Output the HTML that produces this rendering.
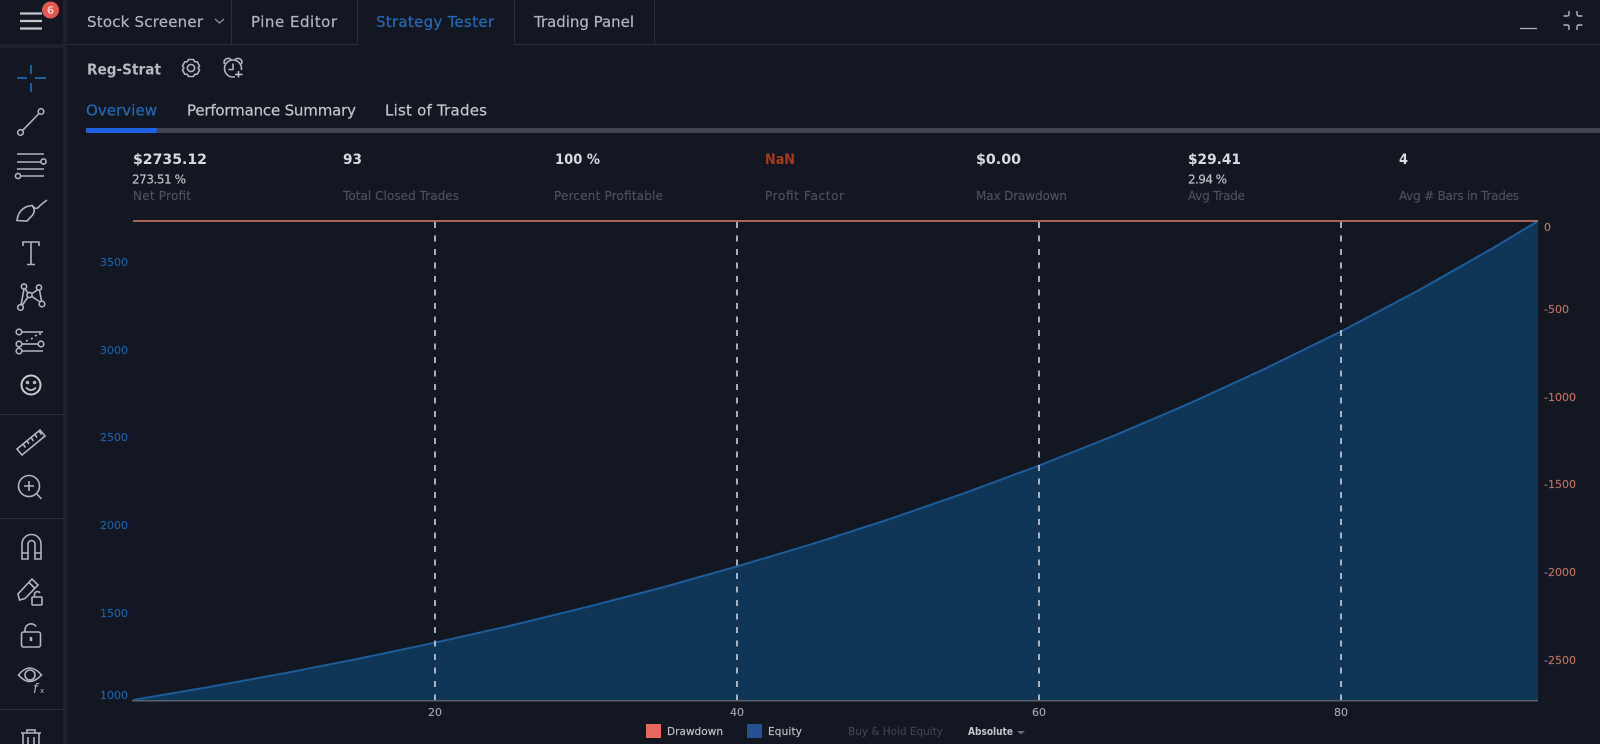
<!DOCTYPE html>
<html>
<head>
<meta charset="utf-8">
<style>
html,body{margin:0;padding:0;width:1600px;height:744px;overflow:hidden;background:#131722}
svg{display:block;position:absolute;left:0;top:0}
text{font-family:"DejaVu Sans",sans-serif}
.tab{font-size:15px;fill:#b2b5be;stroke:#b2b5be;stroke-width:.2}
.blue{fill:#2568b5;stroke:#2568b5}
.hi{fill:#c4c6cc;stroke:#c4c6cc}
.val{font-size:14.5px;font-weight:bold;fill:#d8dae0}
.sub{font-size:12px;fill:#c0c2c9;stroke:#c0c2c9;stroke-width:.15}
.lab{font-size:12px;fill:#4d515c;stroke:#4d515c;stroke-width:.15}
.l{font-size:11px;fill:#1c5ea6;stroke:#1c5ea6;stroke-width:.15}
.r{font-size:11px;fill:#bd7260;stroke:#bd7260;stroke-width:.15}
.x{font-size:11px;fill:#a9acb5;stroke:#a9acb5;stroke-width:.1}
.ic{fill:none;stroke:#b2b5be;stroke-width:1.6}
</style>
</head>
<body>
<svg width="1600" height="744" viewBox="0 0 1600 744" xmlns="http://www.w3.org/2000/svg">
<rect width="1600" height="744" fill="#131722"/>

<!-- frame -->
<rect x="63" y="0" width="4" height="744" fill="#1e222d"/>
<rect x="0" y="44" width="63" height="4" fill="#1e222d"/>
<rect x="67" y="44" width="291" height="1" fill="#2a2e39"/>
<rect x="514" y="44" width="1086" height="1" fill="#2a2e39"/>
<rect x="231" y="0" width="1" height="44" fill="#2a2e39"/>
<rect x="357" y="0" width="1" height="44" fill="#2a2e39"/>
<rect x="514" y="0" width="1" height="44" fill="#2a2e39"/>
<rect x="654" y="0" width="1" height="44" fill="#2a2e39"/>
<rect x="0" y="414" width="63" height="1" fill="#2a2e39"/>
<rect x="0" y="518" width="63" height="1" fill="#2a2e39"/>
<rect x="0" y="709" width="63" height="1" fill="#2a2e39"/>

<!-- hamburger -->
<path d="M20 13.500H42M20 21H42M20 28.500H42" stroke="#c4c6cc" stroke-width="2.200" fill="none"/>
<circle cx="50.500" cy="10" r="8.500" fill="#e5574f"/>
<text x="50.500" y="14" font-size="10.500" font-weight="bold" fill="#f0c9c4" text-anchor="middle">6</text>

<!-- top tabs -->
<text class="tab" x="87" y="27" textLength="116">Stock Screener</text>
<path d="M215 19l4.500 4 4.500-4" fill="none" stroke="#8f929b" stroke-width="1.300"/>
<text class="tab" x="251" y="27" textLength="86">Pine Editor</text>
<text class="tab blue" x="376" y="27" textLength="118">Strategy Tester</text>
<text class="tab" x="534" y="27" textLength="100">Trading Panel</text>

<!-- top right -->
<path d="M1520 28.500H1537" stroke="#b2b5be" stroke-width="1.300"/>
<path d="M1569 11v3q0 2-2 2h-3.500M1577 11v3q0 2 2 2h3.500M1569 30v-3q0-2-2-2h-3.500M1577 30v-3q0-2 2-2h3.500" fill="none" stroke="#b2b5be" stroke-width="1.400"/>

<!-- strategy header -->
<text x="87" y="74.500" font-size="15" font-weight="bold" fill="#b8bac2" textLength="74" lengthAdjust="spacingAndGlyphs">Reg-Strat</text>
<g class="ic">
<path d="M188.500 60.500h5l1.200 2.200 2.500.1 2.300 4.200-1.300 2 1.300 2-2.300 4.200-2.500.1-1.200 2.200h-5l-1.200-2.200-2.500-.1-2.300-4.200 1.300-2-1.300-2 2.300-4.200 2.500-.1z" transform="translate(0 -1)"/>
<circle cx="191" cy="68" r="3.600"/>
<circle cx="233" cy="68.500" r="8.500"/>
<path d="M224.500 64q-1.500-4 2.500-5.500 3-.5 4 1.200M241.500 64q1.500-4-2.500-5.500-3-.5-4 1.200M233 63.500v6h-4.500"/>
</g>
<rect x="235" y="70" width="9" height="9" fill="#131722"/>
<path d="M238.500 71v6.500M235 74.500h7.500" stroke="#c4c6cc" stroke-width="1.500" fill="none"/>

<!-- sub tabs -->
<text class="tab blue" x="86" y="115.500" textLength="71">Overview</text>
<text class="tab hi" x="187" y="115.500" textLength="169">Performance Summary</text>
<text class="tab hi" x="385" y="115.500" textLength="102">List of Trades</text>
<rect x="86" y="128" width="1514" height="5" fill="#434651"/>
<rect x="86" y="128" width="71" height="5" rx="2" fill="#1d62e0"/>

<!-- stats -->
<text class="val" x="133" y="164" textLength="74" lengthAdjust="spacingAndGlyphs">$2735.12</text>
<text class="sub" x="132" y="183.500" textLength="54">273.51 %</text>
<text class="lab" x="133" y="200" textLength="58">Net Profit</text>

<text class="val" x="343" y="164" textLength="19" lengthAdjust="spacingAndGlyphs">93</text>
<text class="lab" x="343" y="200" textLength="116">Total Closed Trades</text>

<text class="val" x="555" y="164" textLength="45" lengthAdjust="spacingAndGlyphs">100 %</text>
<text class="lab" x="554" y="200" textLength="109">Percent Profitable</text>

<text class="val" x="765" y="164" textLength="30" lengthAdjust="spacingAndGlyphs" style="fill:#a83a20">NaN</text>
<text class="lab" x="765" y="200" textLength="79">Profit Factor</text>

<text class="val" x="976" y="164" textLength="45" lengthAdjust="spacingAndGlyphs">$0.00</text>
<text class="lab" x="976" y="200" textLength="91">Max Drawdown</text>

<text class="val" x="1188" y="164" textLength="53" lengthAdjust="spacingAndGlyphs">$29.41</text>
<text class="sub" x="1188" y="183.500" textLength="39">2.94 %</text>
<text class="lab" x="1188" y="200" textLength="57">Avg Trade</text>

<text class="val" x="1399" y="164" textLength="9" lengthAdjust="spacingAndGlyphs">4</text>
<text class="lab" x="1399" y="200" textLength="120">Avg # Bars in Trades</text>

<!-- chart -->
<polygon fill="#0f3557" points="133,700 208.500,687.100 284.100,673.300 359.600,658.500 435.200,642.600 510.700,625.600 586.200,607.200 661.800,587.600 737.300,566.400 812.900,543.800 888.400,519.500 963.900,493.300 1039.500,465.400 1115,435.300 1190.600,402.900 1266.100,368.200 1341.600,331.100 1417.200,291.100 1492.700,248.200 1538,221 1538,700"/>
<polyline fill="none" stroke="#1c5c98" stroke-width="2" points="133,700 208.500,687.100 284.100,673.300 359.600,658.500 435.200,642.600 510.700,625.600 586.200,607.200 661.800,587.600 737.300,566.400 812.900,543.800 888.400,519.500 963.900,493.300 1039.500,465.400 1115,435.300 1190.600,402.900 1266.100,368.200 1341.600,331.100 1417.200,291.100 1492.700,248.200 1538,221"/>
<g stroke="#d1d4dc" stroke-width="1.600" stroke-dasharray="6 7.500" fill="none">
<path d="M435 222V700"/>
<path d="M737 222V700"/>
<path d="M1039 222V700"/>
<path d="M1341 222V700"/>
</g>
<rect x="133" y="220" width="1405" height="2" fill="#a5665a"/>
<rect x="132" y="700" width="1406" height="1.500" fill="#5d606b"/>

<!-- axes -->
<g text-anchor="end">
<text class="l" x="128" y="266">3500</text>
<text class="l" x="128" y="354">3000</text>
<text class="l" x="128" y="441">2500</text>
<text class="l" x="128" y="529">2000</text>
<text class="l" x="128" y="617">1500</text>
<text class="l" x="128" y="699">1000</text>
</g>
<text class="r" x="1544" y="231">0</text>
<text class="r" x="1544" y="313">-500</text>
<text class="r" x="1544" y="401">-1000</text>
<text class="r" x="1544" y="488">-1500</text>
<text class="r" x="1544" y="576">-2000</text>
<text class="r" x="1544" y="664">-2500</text>
<g text-anchor="middle">
<text class="x" x="435" y="716">20</text>
<text class="x" x="737" y="716">40</text>
<text class="x" x="1039" y="716">60</text>
<text class="x" x="1341" y="716">80</text>
</g>

<!-- legend -->
<rect x="646" y="724" width="15" height="14" fill="#e8675f"/>
<text x="667" y="735" font-size="10.500" fill="#bfc1c8" stroke="#bfc1c8" stroke-width=".15" textLength="56">Drawdown</text>
<rect x="747" y="724" width="15" height="14" fill="#24508f"/>
<text x="768" y="735" font-size="10.500" fill="#bfc1c8" stroke="#bfc1c8" stroke-width=".15" textLength="34">Equity</text>
<text x="848" y="735" font-size="10.500" fill="#3f434e" stroke="#3f434e" stroke-width=".15" textLength="95">Buy &amp; Hold Equity</text>
<text x="968" y="735" font-size="11" font-weight="bold" fill="#c4c6cc" textLength="45" lengthAdjust="spacingAndGlyphs">Absolute</text>
<path d="M1017 731h8l-4 3.500z" fill="#6a6d78"/>

<!-- sidebar icons -->
<path d="M31 65V74M31 83V92M17 78H27M35 78H46" stroke="#1f5c9c" stroke-width="2" fill="none"/>
<g class="ic">
<circle cx="20.500" cy="132.500" r="2.800"/><circle cx="41" cy="111.500" r="2.800"/><path d="M22.500 130.500L39 113.500"/>
<path d="M17 154H44M17 162H41M17 169H44M21 176H44"/><circle cx="43.500" cy="161.500" r="2.600"/><circle cx="18" cy="176" r="2.600"/>
<path d="M17 220.500q1-10 10-14l5-1q4 4 1 9l-6 6.500zM33 206q3 5 7-.5l7-5.500"/>
<path d="M23 246v-4h16v4M31 242v22M27 264.500h8"/>
<circle cx="20.500" cy="307.500" r="2.800"/><circle cx="24" cy="286.500" r="2.600"/><circle cx="39" cy="287.500" r="2.600"/><circle cx="29.500" cy="295" r="2.600"/><circle cx="42" cy="304" r="2.800"/><path d="M21 305L24 289M25 288.500L28 293M32 293.500L38 289.500M32 296.500L40 302M22 305.500L28 297M39.500 290L41.500 301"/>
<circle cx="19" cy="332" r="2.800"/><path d="M22 332H43M40 332v3"/><circle cx="19" cy="344" r="2.800"/><circle cx="41" cy="344" r="2.800"/><path d="M22 344H38"/><circle cx="19" cy="351" r="2.800"/><path d="M22 351H43"/><path d="M26 341l3-1M31 339l2-1M35 336l2-1" stroke-dasharray="2 2"/>
<circle cx="31" cy="385" r="9.500" stroke="#c8cad0" stroke-width="2"/><circle cx="27.500" cy="382.500" r="1" fill="#c8cad0"/><circle cx="34.500" cy="382.500" r="1" fill="#c8cad0"/><path d="M26 387.500q5 5 10 0" stroke="#c8cad0"/>
<path d="M17 449l23-19 5 6-23 19z"/><path d="M23 444l2.500 3.500M27 441l2 3M31 437.500l2.500 3.500M35 434.500l2 3M39 431l2.500 3.500"/>
<circle cx="29" cy="486" r="10.500"/><path d="M37 494l4.500 5M24 486h10M29 481v10"/>
<path d="M22 559v-15a9.500 9.500 0 0 1 19 0v15h-6v-15a3.500 3.500 0 0 0-7 0v15zM22 553h6M35 553h6"/>
<path d="M18 594l1.500 6 5.500-1.500 13-13.500-6-6zM28.500 582l6 6"/>
<rect x="32" y="597" width="10" height="8" rx="1"/><path d="M34.500 597v-3a3 3 0 0 1 5.500-1"/>
<rect x="21.500" y="632" width="19" height="15" rx="2"/><path d="M25 632v-2a6 6 0 0 1 11-3.500"/><path d="M31 637v4" stroke-width="2.500"/>
<path d="M18.500 675q11-14 23 0q-12 13-23 0z"/><circle cx="30" cy="675" r="5"/>
<path d="M21 733h20M27 733v-3h8v3M23 733v12M39 733v12M28 737v7M34 737v7"/>
</g>
<text x="33" y="693" font-size="13" font-style="italic" fill="#b2b5be">f</text>
<text x="40" y="693" font-size="7" fill="#b2b5be">x</text>
</svg>
</body>
</html>
